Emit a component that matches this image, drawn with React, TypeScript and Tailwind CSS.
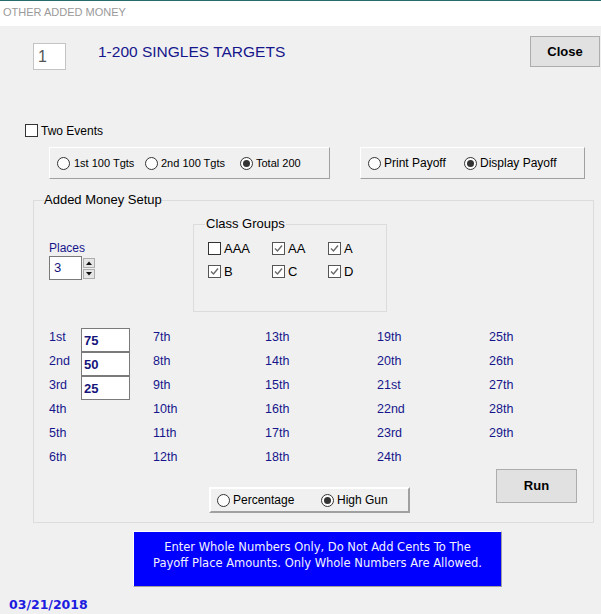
import React from "react";

const NAVY = "text-[#16168c]";

function Radio({ on }: { on?: boolean }) {
  return (
    <span className="w-[13px] h-[13px] rounded-full border border-[#333] bg-white flex items-center justify-center shrink-0">
      {on ? <span className="w-[7px] h-[7px] rounded-full bg-[#333]" /> : null}
    </span>
  );
}

function Check({ on, gray }: { on?: boolean; gray?: boolean }) {
  return (
    <span
      className={
        "w-[13px] h-[13px] border bg-white flex items-center justify-center shrink-0 " +
        (gray ? "border-[#555]" : "border-[#333]")
      }
    >
      {on ? (
        <svg width="11" height="11" viewBox="0 0 11 11">
          <path d="M2 5.5 L4.5 8 L9 2.5" fill="none" stroke="#6a6a6a" strokeWidth="1.4" />
        </svg>
      ) : null}
    </span>
  );
}

function CheckItem({ label, on, w }: { label: string; on?: boolean; w: string }) {
  return (
    <div className={"flex items-center gap-[3px] " + w}>
      <Check on={on} gray={on} />
      <span className="text-[13px] leading-[13px] text-black">{label}</span>
    </div>
  );
}

const col1 = ["1st", "2nd", "3rd", "4th", "5th", "6th"];
const vals = ["75", "50", "25"];
const cols = [
  ["7th", "8th", "9th", "10th", "11th", "12th"],
  ["13th", "14th", "15th", "16th", "17th", "18th"],
  ["19th", "20th", "21st", "22nd", "23rd", "24th"],
  ["25th", "26th", "27th", "28th", "29th"],
];

export default function App() {
  return (
    <div className="w-[601px] h-[614px] bg-[#f0f0f0] overflow-hidden flex flex-col font-['Liberation_Sans',Arial,sans-serif]">
      <div className="h-[1px] bg-[#256d6a] shrink-0" />
      <div className="h-[25px] shrink-0 bg-white flex items-center pl-[3px] pb-[2px] text-[11px] text-[#9a9a9a]">
        OTHER ADDED MONEY
      </div>

      {/* Row 1 */}
      <div className="flex items-start h-[44px] shrink-0">
        <div className="mt-[17px] ml-[33px] w-[33px] h-[27px] border border-[#c4c4c4] bg-white text-[16px] leading-[25px] text-[#555] pl-[4px]">
          1
        </div>
        <div className={"ml-[32px] mt-[17px] leading-[18px] text-[15.5px] " + NAVY}>1-200 SINGLES TARGETS</div>
        <div className="ml-auto mr-[1px] mt-[10px] w-[70px] h-[31px] bg-[#e1e1e1] border border-[#adadad] flex items-center justify-center pt-[1px] text-[13px] font-bold text-black">
          Close
        </div>
      </div>

      {/* Two events */}
      <div className="mt-[54px] h-[13px] shrink-0 flex items-center pl-[25px] gap-[3px]">
        <Check />
        <span className="text-[12px] leading-[13px] text-black pt-[1px]">Two Events</span>
      </div>

      {/* Radio panels */}
      <div className="mt-[10px] h-[32px] shrink-0 flex">
        <div className="ml-[49px] w-[281px] h-[32px] shrink-0 border-t border-l border-white border-b border-r border-b-[#a0a0a0] border-r-[#a0a0a0] flex items-center pl-[7px] text-[11px] text-black">
          <div className="flex items-center gap-[4px] w-[88px]">
            <Radio />
            <span>1st 100 Tgts</span>
          </div>
          <div className="flex items-center gap-[3px] w-[95px]">
            <Radio />
            <span>2nd 100 Tgts</span>
          </div>
          <div className="flex items-center gap-[3px]">
            <Radio on />
            <span>Total 200</span>
          </div>
        </div>
        <div className="ml-[30px] w-[225px] h-[32px] shrink-0 border-t border-l border-white border-b border-r border-b-[#a0a0a0] border-r-[#a0a0a0] flex items-center pl-[7px] text-[12px] text-black">
          <div className="flex items-center gap-[3px] w-[96px]">
            <Radio />
            <span>Print Payoff</span>
          </div>
          <div className="flex items-center gap-[3px]">
            <Radio on />
            <span>Display Payoff</span>
          </div>
        </div>
      </div>

      {/* Group box */}
      <div className="mt-[21px] ml-[33px] w-[561px] h-[323px] shrink-0 relative border border-[#dcdcdc]">
        <div className="absolute -top-[9px] left-[10px] bg-[#f0f0f0] text-[13px] leading-[16px] text-black">
          Added Money Setup
        </div>

        <div className="flex items-start">
          <div className="ml-[15px] mt-[40px] w-[144px] shrink-0">
            <div className={"text-[12px] leading-[14px] " + NAVY}>Places</div>
            <div className="mt-[1px] flex items-start">
              <div className="w-[33px] h-[24px] border border-[#7a7a7a] bg-white text-[13px] leading-[22px] pl-[4px] text-[#14147a]">
                3
              </div>
              <div className="ml-[1px] mt-[2px] flex flex-col gap-[1px]">
                <div className="w-[12px] h-[10px] bg-[#e5e5e5] border border-[#adadad] flex items-center justify-center">
                  <svg width="6" height="4" viewBox="0 0 6 4">
                    <path d="M0 4 L3 0.5 L6 4 Z" fill="#111" />
                  </svg>
                </div>
                <div className="w-[12px] h-[10px] bg-[#e5e5e5] border border-[#adadad] flex items-center justify-center">
                  <svg width="6" height="4" viewBox="0 0 6 4">
                    <path d="M0 0 L3 3.5 L6 0 Z" fill="#111" />
                  </svg>
                </div>
              </div>
            </div>
          </div>

          <div className="mt-[23px] w-[194px] h-[88px] shrink-0 border border-[#dcdcdc] relative">
            <div className="absolute -top-[9px] left-[11px] bg-[#f0f0f0] text-[13px] leading-[16px] text-black px-[1px]">
              Class Groups
            </div>
            <div className="pt-[17px] pl-[14px] flex flex-col gap-[10px]">
              <div className="flex">
                <CheckItem label="AAA" w="w-[64px]" />
                <CheckItem label="AA" on w="w-[56px]" />
                <CheckItem label="A" on w="w-[40px]" />
              </div>
              <div className="flex">
                <CheckItem label="B" on w="w-[64px]" />
                <CheckItem label="C" on w="w-[56px]" />
                <CheckItem label="D" on w="w-[40px]" />
              </div>
            </div>
          </div>
        </div>

        {/* Places grid */}
        <div className={"mt-[16px] ml-[15px] flex text-[12.5px] " + NAVY}>
          <div className="w-[104px] shrink-0 flex flex-col">
            {col1.map((l, i) => (
              <div key={l} className="h-[24px] flex items-start">
                <span className="w-[32px] shrink-0 leading-[18px]">{l}</span>
                {i < 3 ? (
                  <div className="w-[49px] h-[24px] shrink-0 border border-[#7a7a7a] bg-white text-[13px] font-bold leading-[22px] pl-[2px] pt-[1px] text-[#14147a]">
                    {vals[i]}
                  </div>
                ) : null}
              </div>
            ))}
          </div>
          {cols.map((c, ci) => (
            <div key={ci} className={(ci < 3 ? "w-[112px]" : "w-[60px]") + " shrink-0 flex flex-col"}>
              {c.map((l) => (
                <div key={l} className="h-[24px] leading-[18px]">
                  {l}
                </div>
              ))}
            </div>
          ))}
        </div>

        {/* bottom row */}
        <div className="-mt-[3px] flex items-start">
          <div className="ml-[175px] mt-[18px] w-[201px] h-[26px] shrink-0 border-t-2 border-l-2 border-white border-b-2 border-r-2 border-b-[#a0a0a0] border-r-[#a0a0a0] flex items-center pl-[6px] text-[12px] text-black">
            <div className="flex items-center gap-[3px] w-[104px]">
              <Radio />
              <span>Percentage</span>
            </div>
            <div className="flex items-center gap-[3px]">
              <Radio on />
              <span>High Gun</span>
            </div>
          </div>
          <div className="ml-[86px] w-[81px] h-[34px] shrink-0 bg-[#e1e1e1] border border-[#adadad] flex items-center justify-center text-[13px] font-bold text-black">
            Run
          </div>
        </div>
      </div>

      {/* Blue note */}
      <div className="mt-[8px] ml-[133px] w-[369px] h-[56px] shrink-0 bg-[#0000ff] border-t border-l border-white border-b border-r border-b-[#a0a0a0] border-r-[#a0a0a0] pt-[7px] flex flex-col items-center text-[11.5px] leading-[16px] text-[#f2f2ff] font-['DejaVu_Sans',sans-serif]">
        <div>Enter Whole Numbers Only, Do Not Add Cents To The</div>
        <div>Payoff Place Amounts. Only Whole Numbers Are Allowed.</div>
      </div>

      <div className="mt-[11px] ml-[9px] leading-[14px] text-[12.5px] font-bold text-[#1c1ce0] font-['DejaVu_Sans',sans-serif] shrink-0">
        03/21/2018
      </div>
    </div>
  );
}
